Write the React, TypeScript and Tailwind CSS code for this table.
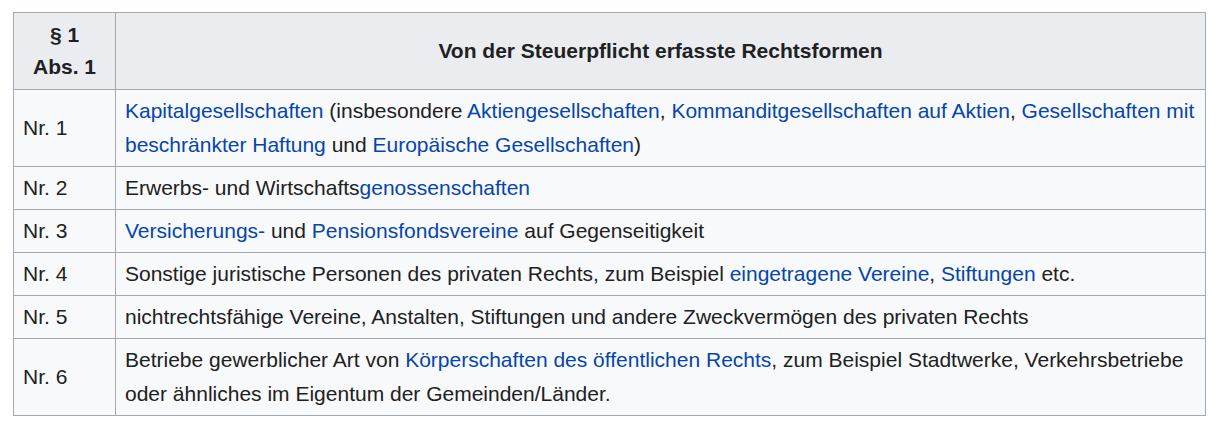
const L = ({ children }: { children: React.ReactNode }) => (
  <a className="text-[#0645ad] no-underline">{children}</a>
);

const rows: { nr: string; content: React.ReactNode }[] = [
  {
    nr: "Nr. 1",
    content: (
      <>
        <L>Kapitalgesellschaften</L> (insbesondere <L>Aktiengesellschaften</L>,{" "}
        <L>Kommanditgesellschaften auf Aktien</L>, <L>Gesellschaften mit beschränkter Haftung</L> und{" "}
        <L>Europäische Gesellschaften</L>)
      </>
    ),
  },
  {
    nr: "Nr. 2",
    content: (
      <>
        Erwerbs- und Wirtschafts<L>genossenschaften</L>
      </>
    ),
  },
  {
    nr: "Nr. 3",
    content: (
      <>
        <L>Versicherungs-</L> und <L>Pensionsfondsvereine</L> auf Gegenseitigkeit
      </>
    ),
  },
  {
    nr: "Nr. 4",
    content: (
      <>
        Sonstige juristische Personen des privaten Rechts, zum Beispiel <L>eingetragene Vereine</L>,{" "}
        <L>Stiftungen</L> etc.
      </>
    ),
  },
  {
    nr: "Nr. 5",
    content: <>nichtrechtsfähige Vereine, Anstalten, Stiftungen und andere Zweckvermögen des privaten Rechts</>,
  },
  {
    nr: "Nr. 6",
    content: (
      <>
        Betriebe gewerblicher Art von <L>Körperschaften des öffentlichen Rechts</L>, zum Beispiel Stadtwerke,
        Verkehrsbetriebe oder ähnliches im Eigentum der Gemeinden/Länder.
      </>
    ),
  },
];

export default function App() {
  return (
    <div className="w-[1220px] h-[430px] bg-white pt-3 pl-[13px] font-['Liberation_Sans',Arial,sans-serif] text-[#202122]">
      <table className="w-[1193px] border-collapse border border-[#a2a9b1] text-[21px]">
        <thead>
          <tr className="bg-[#eaecf0]">
            <th className="w-[102px] h-[77px] border border-[#a2a9b1] px-2 leading-[32px] font-bold text-center">
              § 1
              <br />
              Abs. 1
            </th>
            <th className="border border-[#a2a9b1] px-2 leading-[32px] font-bold text-center">
              Von der Steuerpflicht erfasste Rechtsformen
            </th>
          </tr>
        </thead>
        <tbody>
          {rows.map((r) => (
            <tr key={r.nr} className="bg-[#f8f9fa]">
              <td className="border border-[#a2a9b1] pl-[9px] pr-2 py-1 leading-[34px] align-middle">{r.nr}</td>
              <td className="border border-[#a2a9b1] pl-[9px] pr-2 py-1 leading-[34px] align-middle">{r.content}</td>
            </tr>
          ))}
        </tbody>
      </table>
    </div>
  );
}
